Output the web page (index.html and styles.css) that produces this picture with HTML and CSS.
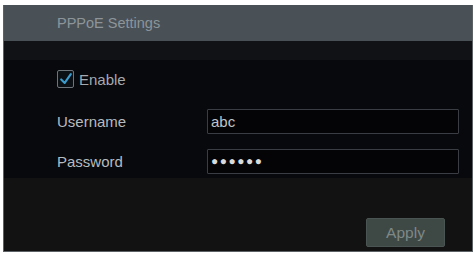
FILE: index.html
```html
<!DOCTYPE html>
<html>
<head>
<meta charset="utf-8">
<link rel="stylesheet" href="styles.css">
</head>
<body>
<div class="panel">
  <div class="header">PPPoE Settings</div>
  <div class="stripe"></div>
  <div class="main">
    <label class="enable">
      <span class="checkbox">
        <svg viewBox="0 0 16 16" width="14" height="14"><path d="M2.5 8.5 L6.5 12.5 L13.5 2.5" fill="none" stroke="#3b9ccc" stroke-width="2.4" stroke-linecap="round" stroke-linejoin="round"/></svg>
      </span>
      <span>Enable</span>
    </label>
    <div class="fields">
      <div class="field">
        <span class="label">Username</span>
        <div class="input">abc</div>
      </div>
      <div class="field">
        <span class="label">Password</span>
        <div class="input dots">●●●●●●</div>
      </div>
    </div>
  </div>
  <div class="footer">
    <button class="apply">Apply</button>
  </div>
</div>
</body>
</html>
```
FILE: styles.css
```css
html, body {
  margin: 0;
  padding: 0;
  background: #ffffff;
}
body {
  padding: 5px 3px 0 3px;
  font-family: "Liberation Sans", Arial, sans-serif;
  font-size: 15px;
}
.panel {
  width: 468px;
  height: 246px;
  border: 1px solid #5c6165;
  border-top: none;
  background: #121212;
  display: flex;
  flex-direction: column;
}
.header {
  height: 36px;
  line-height: 36px;
  background: #495157;
  color: #8d959a;
  padding-left: 53px;
  font-size: 14.5px;
}
.stripe {
  height: 19px;
  background: #111215;
}
.main {
  background: #08090c;
  padding-left: 53px;
  height: 118px;
}
.enable {
  display: flex;
  align-items: center;
  gap: 5px;
  height: 38px;
  color: #a6aaae;
}
.checkbox {
  width: 15px;
  height: 16px;
  border: 1.5px solid #6d747a;
  border-radius: 2px;
  display: flex;
  align-items: center;
  justify-content: center;
  background: #0b1014;
}
.fields {
  padding-top: 3px;
}
.field {
  display: grid;
  grid-template-columns: 150px 252px;
  align-items: center;
  height: 40px;
}
.label {
  color: #b7bbbf;
}
.input {
  height: 25px;
  line-height: 23px;
  border: 1px solid #3a3e44;
  background: #040407;
  color: #c0c4c7;
  padding-left: 3px;
  box-sizing: border-box;
  border-radius: 1px;
}
.dots {
  color: #d8dadc;
  font-size: 12px;
  letter-spacing: 1.5px;
}
.footer {
  flex: 1;
  display: flex;
  justify-content: flex-end;
  align-items: flex-start;
  padding-top: 40px;
  padding-right: 27px;
}
.apply {
  width: 79px;
  height: 29px;
  background: #3e4946;
  border: 1px solid #4a5452;
  border-radius: 2px;
  color: #7e8887;
  font-family: "Liberation Sans", Arial, sans-serif;
  font-size: 15.5px;
  padding: 0;
}
```
